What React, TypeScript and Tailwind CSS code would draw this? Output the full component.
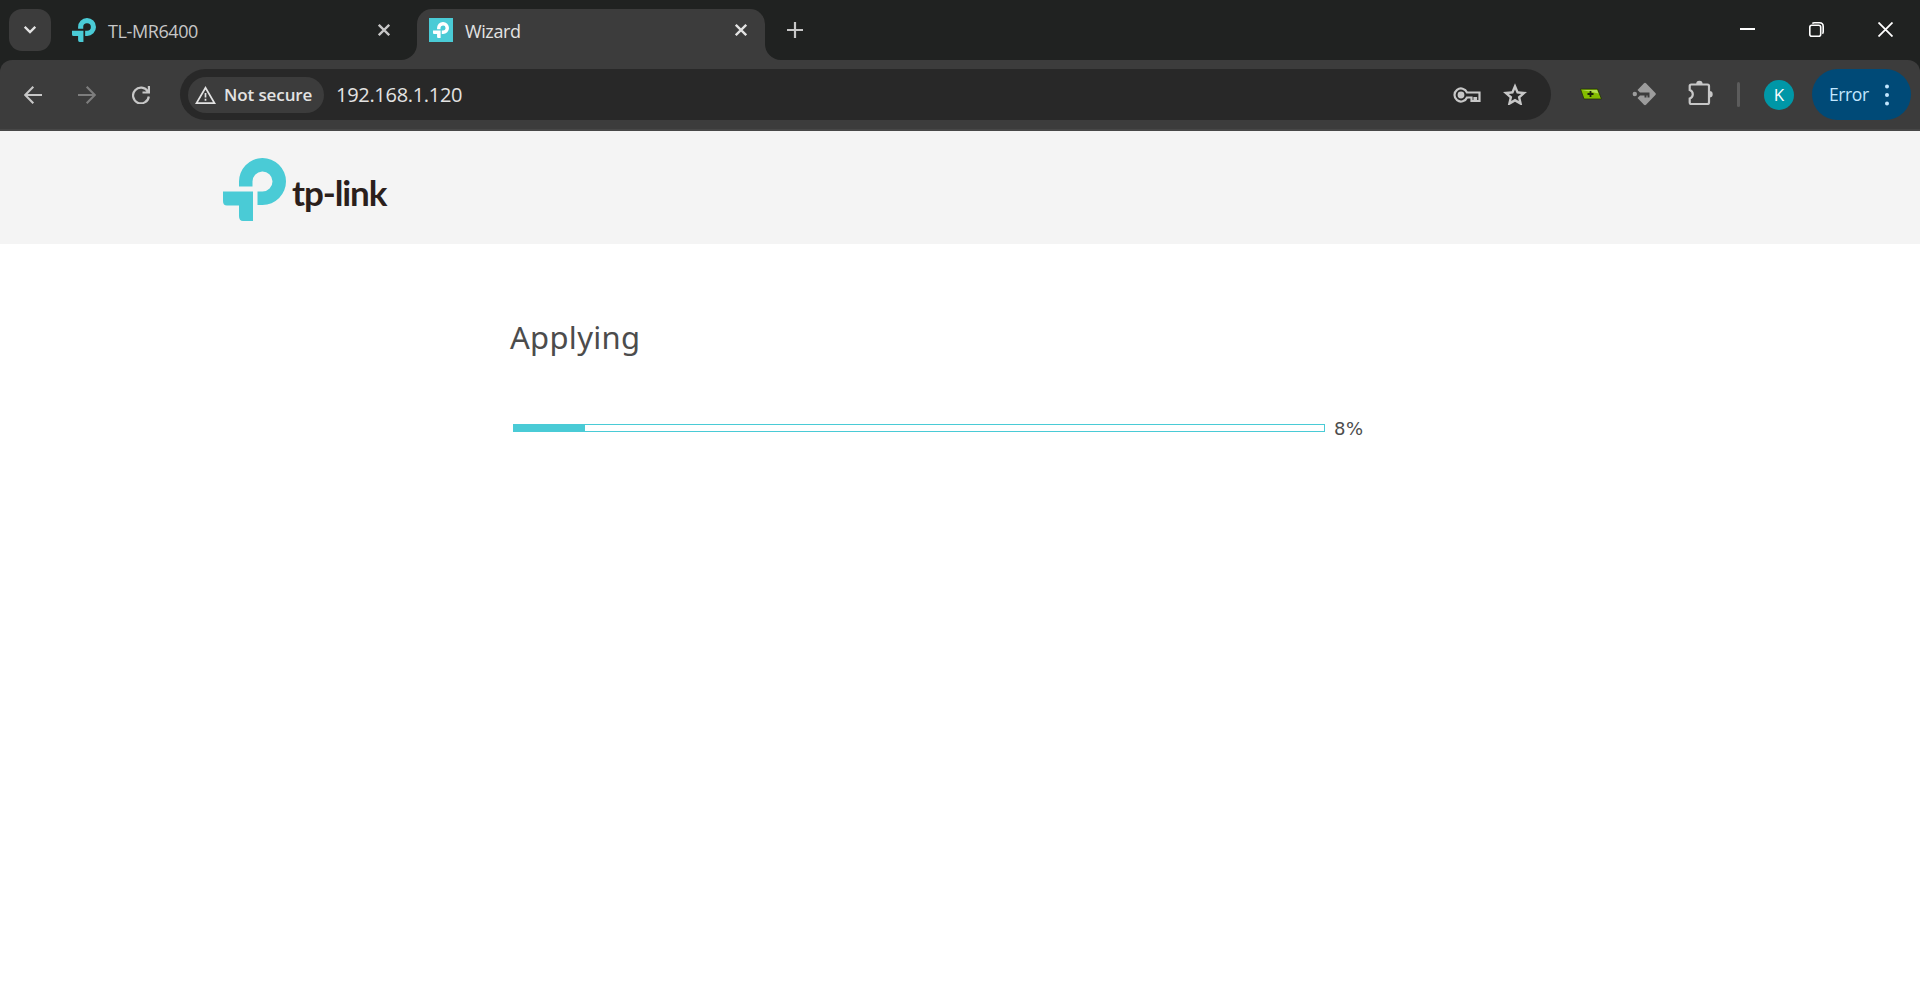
import React from 'react';
import clsx from 'clsx';

interface TabProps {
  title: string;
  icon: React.ReactNode;
  active?: boolean;
}

interface LogoMarkProps {
  className?: string;
}

const PROGRESS = 8;

function LogoMark({ className }: LogoMarkProps) {
  return (
    <svg viewBox="0 0 63 63" className={className} fill="currentColor">
      <path d="M16 28.500V24A23.500 23.500 0 1 1 39.500 47H34.500V33.500H39.500A10 10 0 1 0 29.500 24V28.500Z" />
      <path d="M0 33.500H30V63H20Q16 63 16 58V47.500H4Q0 47.500 0 43Z" />
    </svg>
  );
}

function CloseIcon() {
  return (
    <svg viewBox="0 0 12 12" className="size-3" fill="none" stroke="currentColor" strokeWidth="2.300">
      <path d="M.8.8l10.400 10.400M11.200.8L.8 11.200" />
    </svg>
  );
}

function Tab({ title, icon, active }: TabProps) {
  return (
    <div
      className={clsx(
        'relative flex h-[51px] w-[348px] items-center rounded-t-[15px] pb-[9px] pl-3 pr-[18px]',
        active ? 'bg-[#3c3c3c] text-[#e3e3e3]' : 'text-[#c7c7c7]'
      )}
    >
      {icon}
      <span className="ml-3 flex-1 pt-px text-[18px] leading-6 tracking-[-0.4px]">{title}</span>
      <CloseIcon />
      {active && (
        <>
          <svg viewBox="0 0 16 16" className="absolute -left-4 bottom-0 size-4 fill-[#3c3c3c]">
            <path d="M16 0v16H0A16 16 0 0 0 16 0Z" />
          </svg>
          <svg viewBox="0 0 16 16" className="absolute -right-4 bottom-0 size-4 fill-[#3c3c3c]">
            <path d="M0 0v16h16A16 16 0 0 1 0 0Z" />
          </svg>
        </>
      )}
    </div>
  );
}

function TabStrip() {
  return (
    <div className="flex h-[60px] items-start pl-[9px] pt-[9px]">
      <button className="flex size-[42px] items-center justify-center rounded-[13px] bg-[#3c3c3c] text-[#e3e3e3]" aria-label="Search tabs">
        <svg viewBox="0 0 12 8" className="h-2 w-3" fill="none" stroke="currentColor" strokeWidth="2.300">
          <path d="M.7.800L6 6.100L11.300.800" />
        </svg>
      </button>
      <div className="ml-[9px] flex">
        <Tab title="TL-MR6400" icon={<LogoMark className="size-6 text-[#4acbd6]" />} />
        <div className="w-[9px]" />
        <Tab
          active
          title="Wizard"
          icon={
            <div className="flex size-6 items-center justify-center bg-[#4acbd6]">
              <LogoMark className="size-4 text-white" />
            </div>
          }
        />
      </div>
      <button className="ml-[22px] mt-[13px] text-[#c7c7c7]" aria-label="New tab">
        <svg viewBox="0 0 16 16" className="size-4" fill="none" stroke="currentColor" strokeWidth="2.200">
          <path d="M8 0v16M0 8h16" />
        </svg>
      </button>
      <div className="ml-auto flex gap-[54px] pr-[27px] pt-[13px] text-white">
        <svg viewBox="0 0 15 15" className="size-[15px]" fill="currentColor">
          <path d="M0 6h15v2H0z" />
        </svg>
        <svg viewBox="0 0 15 15" className="size-[15px]" fill="none" stroke="currentColor" strokeWidth="1.600">
          <rect x=".8" y="3.300" width="10.900" height="10.900" rx="2" />
          <path d="M3.300 1.500Q4 .8 5.500.8H10.500Q14.200.8 14.200 4.500V9.500Q14.200 11 13.500 11.700" />
        </svg>
        <svg viewBox="0 0 15 15" className="size-[15px]" fill="none" stroke="currentColor" strokeWidth="1.800">
          <path d="M.5.5l14 14M14.500.5l-14 14" />
        </svg>
      </div>
    </div>
  );
}

function AddressBar() {
  return (
    <div className="flex h-[51px] w-[1371px] items-center rounded-full bg-[#282828] pl-2 pr-6">
      <div className="flex h-9 w-[136px] items-center rounded-full bg-[#3c3c3c] pl-[7px] text-[#e3e3e3]">
        <svg viewBox="0 0 21 18" className="h-[18px] w-[21px]" fill="none" stroke="currentColor" strokeWidth="1.700">
          <path d="M10.500 1.700L19.600 17.200H1.400Z" />
          <path d="M10.500 7v4.500M10.500 12.800v2" />
        </svg>
        <span className="ml-2 whitespace-nowrap text-[17px] font-semibold leading-6 tracking-[-0.1px]">Not secure</span>
      </div>
      <span className="ml-3 flex-1 text-[20px] leading-6 tracking-[-0.3px] text-[#e3e3e3]">192.168.1.120</span>
      <svg viewBox="0 0 28 16" className="h-4 w-7 text-[#c7c7c7]" fill="none" stroke="currentColor" strokeWidth="2.200">
        <circle cx="8" cy="8" r="2.300" fill="currentColor" />
        <path d="M14 5.500A6.500 6.500 0 1 0 14 10.500H18.500V14H21.500V11H23V14H26.500V5.500Z" />
      </svg>
      <svg viewBox="80 -880 800 760" className="mb-0.5 ml-[22px] h-[23px] w-6 fill-[#c7c7c7]">
        <path d="m354-247 126-76 126 77-33-144 111-96-146-13-58-136-58 135-146 13 111 97-33 143ZM233-80l65-281L80-550l288-25 112-265 112 265 288 25-218 189 65 281-247-149L233-80Z" />
      </svg>
    </div>
  );
}

function Toolbar() {
  return (
    <div className="flex h-[71px] items-start rounded-t-[12px] border-b-2 border-[#474747] bg-[#3c3c3c] pl-6 pr-[9px] pt-[9px]">
      <div className="flex h-[51px] w-[156px] items-center gap-9 text-[#c7c7c7]">
        <svg viewBox="0 0 18 18" className="size-[18px]" fill="none" stroke="currentColor" strokeWidth="2.100">
          <path d="M18 9H1.500M9.300.8L1.200 9l8.100 8.200" />
        </svg>
        <svg viewBox="0 0 18 18" className="size-[18px] text-[#7d7d7d]" fill="none" stroke="currentColor" strokeWidth="2.100">
          <path d="M0 9h16.500M8.700.8L16.800 9l-8.100 8.200" />
        </svg>
        <svg viewBox="0 0 18 18" className="size-[18px]" fill="none" stroke="currentColor" strokeWidth="2.200">
          <path d="M16.900 0V6.500H10.500M15.800 5.500A7.900 7.900 0 1 0 16.800 10.500" />
        </svg>
      </div>
      <AddressBar />
      <div className="flex h-[51px] flex-1 items-center pl-[29px]">
        <svg viewBox="0 0 22 12" className="mb-px h-3 w-[22px]">
          <path d="M.5 1H17.500L21.500 11H4Z" fill="#84bd00" stroke="#23300a" strokeWidth=".8" />
          <path d="M2 2H17L18.500 5.500Z" fill="#b5df55" />
          <path d="M10.500 3v6M7.500 6h6" stroke="#1b2408" strokeWidth="1.800" />
        </svg>
        <svg viewBox="0 0 24 24" className="mb-px ml-[30px] size-6 fill-[#9c9c9c]">
          <path d="M12 1.200Q13 .3 14 1.200L23.400 11Q24.300 12 23.400 13L14 22.800Q13 23.700 12 22.800L5.500 16L8 13.500H12.500V15.500H14.500V13.500H15.500V15.500H17.500V10.500H8L5.500 8Z" />
          <circle cx="2.800" cy="12" r="2.200" />
        </svg>
        <svg viewBox="0 0 25 25" className="mb-1 ml-8 size-[25px]" fill="none" stroke="#c7c7c7" strokeWidth="2.200">
          <path d="M3.200 4.500H19.500Q21 4.500 21 6V22.500Q21 24 19.500 24H3.200Q1.700 24 1.700 22.500V18.500Q4.800 17.500 4.800 14.300T1.700 10V6Q1.700 4.500 3.200 4.500Z" />
          <path d="M8.200 4a3.200 3.200 0 0 1 6.400 0ZM21.500 11a3.200 3.200 0 0 1 0 6.400Z" fill="#c7c7c7" stroke="none" />
        </svg>
        <div className="ml-6 h-[25px] w-[3px] rounded-full bg-[#5c5c5c]" />
        <div className="ml-6 flex size-[30px] items-center justify-center rounded-full bg-[#0097a7] text-[17px] text-white">K</div>
        <button className="ml-auto flex h-[51px] w-[99px] items-center rounded-full bg-[#004a77] pl-[17px] text-[#c2e7ff]">
          <span className="pb-px text-[17.500px] leading-6 tracking-[-0.4px]">Error</span>
          <svg viewBox="0 0 4 22" className="ml-auto mr-[22px] h-[22px] w-1" fill="currentColor">
            <circle cx="2" cy="2.500" r="2" />
            <circle cx="2" cy="11" r="2" />
            <circle cx="2" cy="19.500" r="2" />
          </svg>
        </button>
      </div>
    </div>
  );
}

export default function App() {
  return (
    <div className="flex h-screen flex-col overflow-hidden bg-[#202221] font-['Open_Sans','Noto_Sans',sans-serif]">
      <TabStrip />
      <Toolbar />
      <main className="flex-1 bg-white text-[#4c4c4c]">
        <header className="flex h-[113px] bg-[#f4f4f4] pl-[223px] pt-[27px]">
          <LogoMark className="size-[63px] text-[#4acbd6]" />
          <span className="ml-[6px] mt-[14px] font-['Lato',sans-serif] text-[35px] font-bold leading-10 tracking-[-1.100px] text-[#2b1f1c]">
            tp-link
          </span>
        </header>
        <section className="pl-[510px] pt-[72px] font-['Noto_Sans',sans-serif]">
          <h1 className="text-[31px] leading-[42px] tracking-[0.3px]">Applying</h1>
          <div className="mt-[57px] flex items-center pl-[3px]">
            <div className="h-2 w-[812px] border border-[#4acbd6]">
              <div className="h-full bg-[#4acbd6]" style={{ width: `${PROGRESS * 1.1}%` }} />
            </div>
            <span className="ml-[9px] pt-0.5 font-['DejaVu_Sans',sans-serif] text-[18px] leading-6 tracking-[0.6px]">{PROGRESS}%</span>
          </div>
        </section>
      </main>
    </div>
  );
}
